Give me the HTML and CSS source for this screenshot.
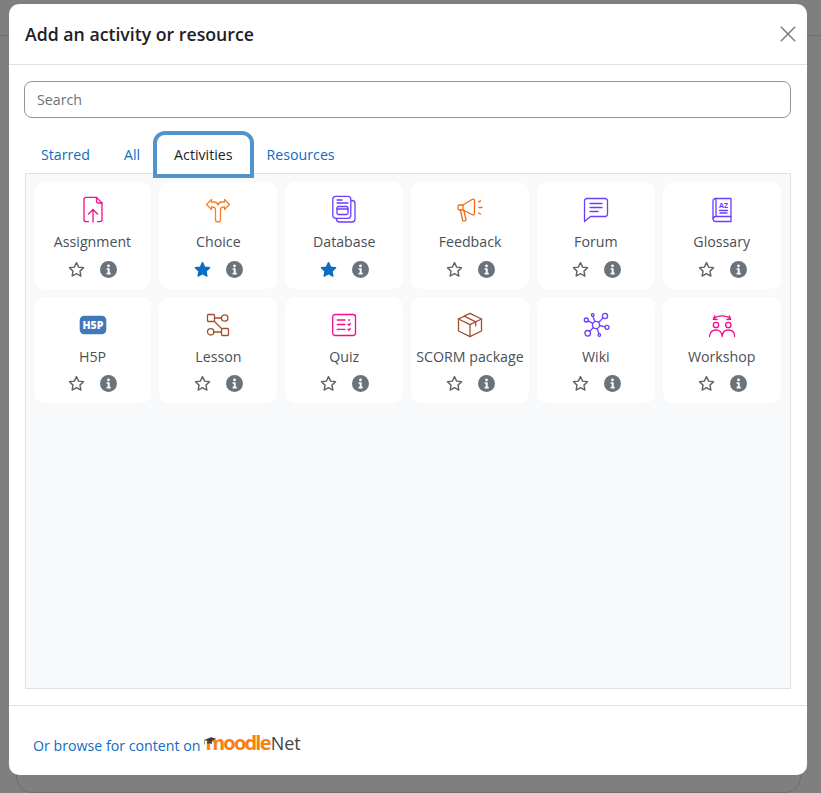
FILE: index.html
```html
<!DOCTYPE html>
<html lang="en">
<head>
<meta charset="utf-8">
<title>Add an activity or resource</title>
<link rel="stylesheet" href="styles.css">
</head>
<body>
<svg class="defs" width="0" height="0" aria-hidden="true">
  <symbol id="star" viewBox="0 0 24 24"><path d="M12 2.2l3 6.4 7 .9-5.1 4.8 1.3 6.9-6.2-3.4-6.2 3.4 1.3-6.9L2 9.5l7-.9z"/></symbol>
  <symbol id="info" viewBox="0 0 16 16"><circle cx="8" cy="8" r="8" fill="#6a737b"/><circle cx="8" cy="4.6" r="1.3" fill="#fff"/><path fill="#fff" d="M6.2 6.8h2.9v4.3h1v1.5H6.2v-1.5h1.1V8.3H6.2z"/></symbol>
</svg>
<div class="page-line"></div>
<div class="page-card"></div>
<main class="modal">
  <header class="modal-header">
    <h1 class="modal-title">Add an activity or resource</h1>
    <svg class="close" width="16" height="16" viewBox="0 0 16 16"><path d="M.8.8l14.4 14.4M15.2.8L.8 15.2"/></svg>
  </header>
  <section class="modal-body">
    <input class="search" type="text" placeholder="Search">
    <nav class="tabs">
      <a class="tab">Starred</a>
      <a class="tab">All</a>
      <a class="tab active">Activities</a>
      <a class="tab">Resources</a>
    </nav>
    <div class="panel">
      <div class="grid">
        <article class="card">
          <svg class="icon pink" viewBox="0 0 24 24"><path d="M7.5 23.6H5a2 2 0 0 1-2-2V1.4a2 2 0 0 1 2-2h10.5L21 5V21.6a2 2 0 0 1-2 2h-2.5"/><path d="M15.5-.6V3.3A1.7 1.7 0 0 0 17.2 5H21"/><path d="M12 24V11.5M7.5 16 12 11.5 16.500 16"/></svg>
          <div class="label">Assignment</div>
          <div class="actions"><svg class="star"><use href="#star"/></svg><svg class="info"><use href="#info"/></svg></div>
        </article>
        <article class="card">
          <svg class="icon orange" viewBox="0 0 24 24"><path d="M9.500 21.500V12c0-2-1-3-3-3H5.500v2.500L.5 6.500l5-5V4H8c2 0 3.500 1 4 3 .5-2 2-3 4-3h2.500V1.500l5 5-5 5V9H17.500c-2 0-3 1-3 3v9.500a2.500 2.500 0 0 1-5 0z"/></svg>
          <div class="label">Choice</div>
          <div class="actions"><svg class="star on"><use href="#star"/></svg><svg class="info"><use href="#info"/></svg></div>
        </article>
        <article class="card">
          <svg class="icon purple" viewBox="0 0 24 24"><rect x=".8" y="-1.700" width="18" height="22" rx="3"/><path d="M19.500 2.500h.5a3 3 0 0 1 3 3V21a3 3 0 0 1-3 3H7.500a3 3 0 0 1-3-3v-.5"/><path d="M5 2h5M5 5h11"/><rect x="5" y="8.500" width="11" height="8" rx="1.500"/><path d="M5 11h11"/></svg>
          <div class="label">Database</div>
          <div class="actions"><svg class="star on"><use href="#star"/></svg><svg class="info"><use href="#info"/></svg></div>
        </article>
        <article class="card">
          <svg class="icon dark-orange" viewBox="0 0 24 24"><path d="M5 7l9-5.500c1.500-1 2.500 0 2.500 1.500v12c0 1.500-1 2.500-2.500 1.500L5 12z"/><path d="M5 7H1.500A1.500 1.500 0 0 0 0 8.500v2A1.500 1.500 0 0 0 1.500 12H5"/><path d="M2.500 12l2 10a1 1 0 0 0 1 .8H7a1 1 0 0 0 1-1.200L6 13"/><path d="M20.500 3.800l2-1M21 9.500h3M20.500 15l2 1"/></svg>
          <div class="label">Feedback</div>
          <div class="actions"><svg class="star"><use href="#star"/></svg><svg class="info"><use href="#info"/></svg></div>
        </article>
        <article class="card">
          <svg class="icon purple" viewBox="0 0 24 24"><path d="M3 .5h18a2.500 2.500 0 0 1 2.500 2.500v13a2.500 2.500 0 0 1-2.500 2.500H6.500L.5 23.500V3A2.500 2.500 0 0 1 3 .5z"/><path d="M6 5.500h12M6 9.500h12M6 13.500h8"/></svg>
          <div class="label">Forum</div>
          <div class="actions"><svg class="star"><use href="#star"/></svg><svg class="info"><use href="#info"/></svg></div>
        </article>
        <article class="card">
          <svg class="icon purple" viewBox="0 0 24 24"><path d="M5.500.5H21v23H6a3 3 0 0 1-3-3V3A2.500 2.500 0 0 1 5.500.5z"/><path d="M3 20.500A2.800 2.800 0 0 1 6 18.500h15M6 .5v18"/><path d="M9.500 12.500h8M10 15h7"/><text class="az" x="13.500" y="10">AZ</text></svg>
          <div class="label">Glossary</div>
          <div class="actions"><svg class="star"><use href="#star"/></svg><svg class="info"><use href="#info"/></svg></div>
        </article>
        <article class="card">
          <svg class="icon h5p" viewBox="0 0 24 24"><rect x="-1.300" y="2.700" width="26.600" height="18.600" rx="4.500"/><text x="12" y="16" class="h5p-text">H5P</text></svg>
          <div class="label">H5P</div>
          <div class="actions"><svg class="star"><use href="#star"/></svg><svg class="info"><use href="#info"/></svg></div>
        </article>
        <article class="card">
          <svg class="icon brown" viewBox="0 0 24 24"><rect x="1.500" y="1.500" width="7" height="7" rx="1"/><circle cx="18.700" cy="5" r="3.200"/><circle cx="4.700" cy="18.800" r="3.200"/><rect x="15.500" y="15.500" width="7" height="7" rx="1"/><path d="M8.500 5h7M8 19h7.500M8.500 8.500l7 7"/></svg>
          <div class="label">Lesson</div>
          <div class="actions"><svg class="star"><use href="#star"/></svg><svg class="info"><use href="#info"/></svg></div>
        </article>
        <article class="card">
          <svg class="icon pink" viewBox="0 0 24 24"><rect x=".7" y="1.500" width="22.800" height="21" rx="2.500"/><path d="M5.300 7H13M5.300 11.500H13M5.300 16.300H13M17 6.500v1.200M16 11.300l1 1 1.300-1.800M16 16.300l1 1 1.300-1.800"/></svg>
          <div class="label">Quiz</div>
          <div class="actions"><svg class="star"><use href="#star"/></svg><svg class="info"><use href="#info"/></svg></div>
        </article>
        <article class="card">
          <svg class="icon brown" viewBox="0 0 24 24"><path d="M12 .3l11.500 5.700v12L12 23.700.5 18V6z"/><path d="M.5 6L12 11.700 23.500 6M12 11.700v12M6.200 3.200l11.500 5.700v4"/></svg>
          <div class="label">SCORM package</div>
          <div class="actions"><svg class="star"><use href="#star"/></svg><svg class="info"><use href="#info"/></svg></div>
        </article>
        <article class="card">
          <svg class="icon purple" viewBox="0 0 24 24"><circle cx="12" cy="12" r="3.600"/><circle cx="21" cy="3" r="2.600"/><circle cx="2.300" cy="7" r="2"/><circle cx="8.700" cy="2" r="1.300"/><circle cx="23" cy="14.300" r="2"/><circle cx="3.700" cy="20.300" r="2.800"/><circle cx="15.300" cy="22" r="1.300"/><path d="M14.500 9.500l4.600-4.600M4.100 7.900l4.600 2.400M9 3.300l1.800 5.300M15.600 12.500l5.400 1.300M9.500 14.500l-3.800 3.800M13 15.500l2 5.200"/></svg>
          <div class="label">Wiki</div>
          <div class="actions"><svg class="star"><use href="#star"/></svg><svg class="info"><use href="#info"/></svg></div>
        </article>
        <article class="card">
          <svg class="icon pink" viewBox="0 0 24 24"><path d="M4 5.500C8 2 16 2 20 5.500"/><path d="M4.800 2.800 3.300 6.300l3.800.2M19.200 2.800l1.500 3.500-3.800.2"/><circle cx="6" cy="12" r="2.700"/><circle cx="18.300" cy="12" r="2.700"/><path d="M-.5 23.500C0 18.500 3 17 6 17s6 2 6.200 6.500C12.400 19 15.300 17 18.300 17s6.200 1.500 6.400 6.500"/></svg>
          <div class="label">Workshop</div>
          <div class="actions"><svg class="star"><use href="#star"/></svg><svg class="info"><use href="#info"/></svg></div>
        </article>
      </div>
    </div>
  </section>
  <footer class="modal-footer">
    <a class="browse">Or browse for content on</a>
    <span class="logo">
      <svg class="hat" width="13" height="10" viewBox="0 0 14 11"><path fill="#3a3a3a" d="M0 3.200 7.500.3 13.500 2 6.500 5z"/><path fill="#3a3a3a" d="M3.500 4.500v3.200c2-1 3.500-1 5 .3V3.800L6.500 5z"/><path stroke="#555" stroke-width=".7" fill="none" d="M.5 3.200v5"/></svg>
      <span class="logo-moodle">moodle</span><span class="logo-net">Net</span>
    </span>
  </footer>
</main>
</body>
</html>
```

FILE: styles.css
```css
* { box-sizing: border-box; }
html, body { margin: 0; height: 100%; }
body {
  background: #7f7f7f;
  font-family: "Open Sans", "Noto Sans", sans-serif;
  font-size: 14.2px;
  color: #495057;
  overflow: hidden;
  position: relative;
}
.defs { position: absolute; }
.page-line {
  position: absolute;
  left: 0; right: 0; top: 35px;
  height: 1px;
  background: #717171;
}
.page-card {
  position: absolute;
  left: 16px; top: 700px;
  width: 785px; height: 93px;
  border: 1px solid #6f6f6f;
  border-radius: 16px;
}
.modal {
  position: relative;
  margin: 4px 0 0 9px;
  width: 798px;
  height: 771px;
  background: #fff;
  border-radius: 10px;
  display: flex;
  flex-direction: column;
}
.modal-header {
  height: 61px;
  flex: none;
  border-bottom: 1px solid #dee2e6;
  display: flex;
  align-items: center;
  justify-content: space-between;
  padding: 0 11px 0 16px;
}
.modal-title {
  margin: 0;
  font-size: 17.7px;
  font-weight: 600;
  color: #1d2125;
}
.close path { stroke: #7b7b7b; stroke-width: 1.500; fill: none; }
.modal-body {
  flex: 1;
  min-height: 0;
  padding: 16px 16px 16px 15px;
  display: flex;
  flex-direction: column;
}
.search {
  flex: none;
  width: 767px;
  height: 37px;
  border: 1px solid #8f959e;
  border-radius: 8px;
  padding: 0 12px;
  font: inherit;
  color: #495057;
  outline: none;
}
.search::placeholder { color: #6a737b; opacity: 1; }
.tabs {
  flex: none;
  display: flex;
  height: 39px;
  margin: 17px 0 -1px;
  position: relative;
  z-index: 1;
}
.tab {
  padding: 0 17px;
  line-height: 39px;
  color: #0f6cbf;
  white-space: nowrap;
}
.tab.active {
  color: #1d2125;
  background: #fff;
  outline: 4px solid #4f94cd;
  border-radius: 8px 8px 0 0;
}
.panel {
  flex: 1;
  min-height: 0;
  margin-left: 1px;
  background: #f8f9fa;
  border: 1px solid #dee2e6;
  padding: 8px 9.4px 8px 7.6px;
}
.grid {
  display: grid;
  grid-template-columns: repeat(6, 1fr);
  grid-auto-rows: 106.500px;
  gap: 8px;
}
.card {
  background: #fff;
  border-radius: 10px;
  padding-top: 16px;
  display: flex;
  flex-direction: column;
  align-items: center;
}
.icon {
  display: block;
  width: 24px;
  height: 24px;
  flex: none;
  overflow: visible;
  fill: none;
  stroke-width: 1.300;
  stroke-linecap: round;
  stroke-linejoin: round;
}
.pink { stroke: #f50b8c; }
.orange { stroke: #f57e2a; }
.dark-orange { stroke: #f06a14; }
.purple { stroke: #6a3dff; }
.brown { stroke: #a14f2d; }
.h5p rect { fill: #4178b8; stroke: none; }
.h5p-text {
  fill: #fff;
  stroke: none;
  font-family: "Open Sans", sans-serif;
  font-size: 10.500px;
  font-weight: 800;
  text-anchor: middle;
}
.az {
  fill: #6a3dff;
  stroke: none;
  font-family: "Open Sans", sans-serif;
  font-size: 7px;
  font-weight: 700;
  text-anchor: middle;
}
.label {
  margin-top: 9px;
  line-height: 22px;
  height: 22px;
  white-space: nowrap;
}
.actions {
  margin: 7.500px 0 0 .8px;
  display: flex;
  gap: 15px;
  align-items: center;
}
.star, .info { display: block; width: 17px; height: 17px; flex: none; }
.star { fill: none; stroke: #5f6368; stroke-width: 2; stroke-linejoin: round; }
.star.on { fill: #0f6cbf; stroke: #0f6cbf; }
.modal-footer {
  height: 70px;
  flex: none;
  border-top: 1px solid #dee2e6;
  display: flex;
  align-items: flex-start;
  gap: 5px;
  padding: 29px 0 0 24px;
}
.browse { color: #0f6cbf; line-height: 22px; }
.logo {
  position: relative;
  display: inline-flex;
  align-items: baseline;
  line-height: 22px;
  margin-top: -3px;
}
.hat { position: absolute; left: -1px; top: 5px; }
.logo-moodle {
  color: #f98012;
  font-size: 20px;
  font-weight: 700;
  letter-spacing: -1.800px;
}
.logo-net {
  color: #444;
  font-size: 18px;
  margin-left: 1px;
}
```
